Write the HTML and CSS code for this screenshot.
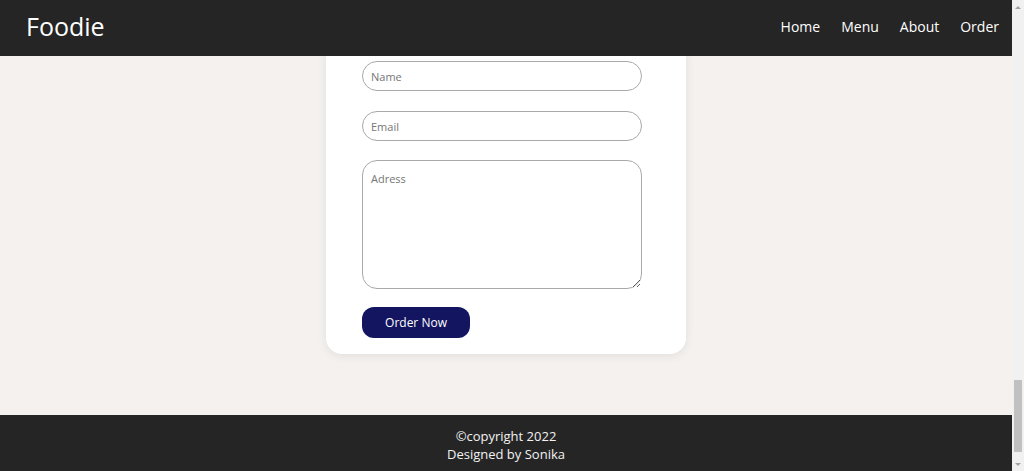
FILE: index.html
```html
<!DOCTYPE html>
<html lang="en">
<head>
<meta charset="utf-8">
<title>Foodie</title>
<link rel="stylesheet" href="styles.css">
</head>
<body>
<div class="page">
  <header class="topbar">
    <div class="logo">Foodie</div>
    <nav class="nav">
      <a href="#">Home</a>
      <a href="#">Menu</a>
      <a href="#">About</a>
      <a href="#">Order</a>
    </nav>
  </header>
  <main class="main">
    <form class="card">
      <input class="field name" type="text" placeholder="Name">
      <input class="field email" type="email" placeholder="Email">
      <textarea class="field area" placeholder="Adress"></textarea>
      <button class="btn" type="button">Order Now</button>
    </form>
  </main>
  <footer class="footer">
    <p>&copy;copyright 2022</p>
    <p>Designed by Sonika</p>
  </footer>
</div>
<div class="scrollbar">
  <div class="arrow up"></div>
  <div class="track"><div class="thumb"></div></div>
  <div class="arrow down"></div>
</div>
</body>
</html>
```

FILE: styles.css
```css
* { box-sizing: border-box; }
html, body { margin: 0; height: 100%; }
body {
  display: flex;
  height: 471px;
  overflow: hidden;
  font-family: "Comic Sans MS", "Open Sans", sans-serif;
  background: #f4f1ef;
}
.page {
  flex: 1;
  display: flex;
  flex-direction: column;
  min-width: 0;
}
.topbar {
  height: 56px;
  background: #252525;
  display: flex;
  align-items: center;
  justify-content: space-between;
  padding: 0 13px 0 26px;
  position: relative;
  z-index: 2;
}
.logo {
  color: #fff;
  font-size: 25px;
  line-height: 1;
  padding-bottom: 4px;
}
.nav {
  display: flex;
  gap: 21px;
}
.nav a {
  color: #fff;
  text-decoration: none;
  font-size: 14px;
  padding-bottom: 3px;
}
.main {
  flex: 1;
  overflow: hidden;
  display: flex;
  justify-content: center;
  align-items: flex-start;
}
.card {
  width: 360px;
  margin-top: -20px;
  background: #fff;
  border-radius: 16px;
  box-shadow: 0 2px 10px rgba(0,0,0,0.08);
  padding: 25px 36px 16px;
  display: flex;
  flex-direction: column;
  align-items: flex-start;
}
.field {
  width: 280px;
  height: 30px;
  border: 1px solid #a9a9a9;
  border-radius: 15px;
  padding: 0 8px;
  font-family: inherit;
  font-size: 11px;
  color: #333;
  margin-bottom: 20px;
  background: #fff;
  outline: none;
}
.field.email { margin-bottom: 19px; }
.field::placeholder { color: #767676; }
.area {
  height: 129px;
  padding: 10px 8px;
  resize: vertical;
  margin-bottom: 18px;
}
.btn {
  width: 108px;
  height: 31px;
  border: none;
  border-radius: 12px;
  background: #141560;
  color: #fff;
  font-family: inherit;
  font-size: 12px;
}
.footer {
  height: 56px;
  background: #252525;
  color: #f2f2f2;
  display: flex;
  flex-direction: column;
  align-items: center;
  justify-content: center;
  font-size: 13px;
  line-height: 18px;
  padding-top: 3px;
}
.footer p { margin: 0; }
.scrollbar {
  width: 12px;
  background: #f1f1f1;
  display: flex;
  flex-direction: column;
}
.arrow {
  height: 14px;
  display: flex;
  justify-content: center;
  align-items: center;
}
.arrow::before {
  content: "";
  width: 0; height: 0;
  border-left: 3px solid transparent;
  border-right: 3px solid transparent;
}
.arrow.up::before { border-bottom: 3px solid #a3a3a3; }
.arrow.down::before { border-top: 3px solid #a3a3a3; }
.track {
  flex: 1;
  display: flex;
  flex-direction: column;
  justify-content: flex-end;
  padding: 0 2px 5px;
}
.thumb {
  height: 72px;
  background: #c1c1c1;
}
```
